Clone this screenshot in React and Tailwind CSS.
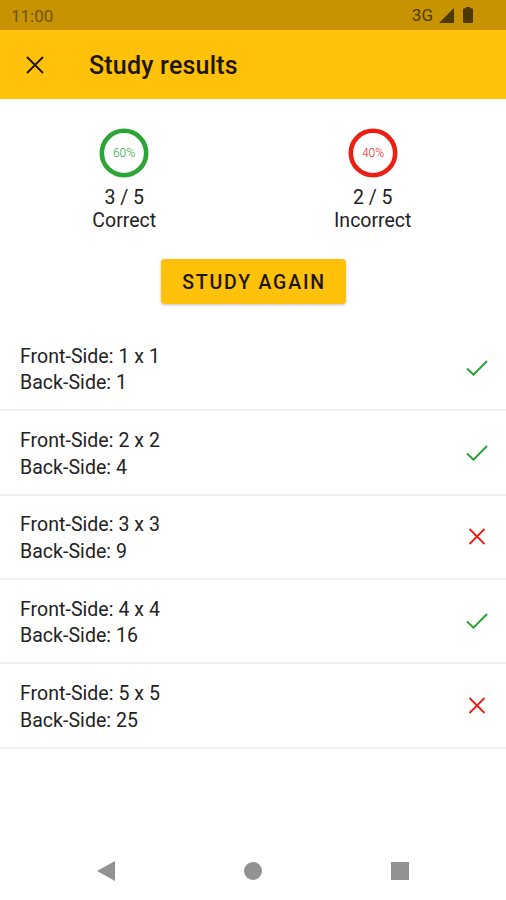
import React from "react";

const cards = [
  { front: "1 x 1", back: "1", correct: true },
  { front: "2 x 2", back: "4", correct: true },
  { front: "3 x 3", back: "9", correct: false },
  { front: "4 x 4", back: "16", correct: true },
  { front: "5 x 5", back: "25", correct: false },
];

function StatusBar() {
  return (
    <div className="h-[30px] shrink-0 bg-[#c79300] flex items-center justify-between pl-[11px] pr-[33px]">
      <span className="text-[17px] leading-[30px] text-[#6f5200] pt-px">11:00</span>
      <div className="flex items-center">
        <span className="text-[17px] leading-[30px] text-[#4d3900] mr-[6px]">3G</span>
        <svg className="w-[15px] h-[15px] mr-[9px]" viewBox="0 0 15 15" fill="#4d3900">
          <path d="M15 0v15H0z" />
        </svg>
        <svg className="w-[10px] h-[16px]" viewBox="0 0 10 16" fill="#4d3900">
          <path d="M3 0h4v1.2h2q1 0 1 1V15q0 1-1 1H1q-1 0-1-1V2.200q0-1 1-1h2z" />
        </svg>
      </div>
    </div>
  );
}

function Header() {
  return (
    <div className="h-[69px] shrink-0 bg-[#ffc10a] flex items-center pl-[26px]">
      <svg className="w-[18px] h-[18px] mr-[45px]" viewBox="0 0 18 18" fill="none" stroke="#1c1600" strokeWidth="1.8">
        <path d="M1 1l16 16M17 1L1 17" />
      </svg>
      <h1 className="text-[25px] leading-[30px] font-medium tracking-[0.2px] text-[#1c1600] pt-[3px]">Study results</h1>
    </div>
  );
}

function Score({ percent, amount, label, color }) {
  return (
    <div className="flex flex-col items-center">
      <svg className="w-[50px] h-[50px]" viewBox="0 0 50 50">
        <circle cx="25" cy="25" r="22.2" fill="none" stroke={color} strokeWidth="4.6" />
        <text x="25" y="29" textAnchor="middle" fontSize="12" fontWeight="300" fill={color}>
          {percent}
        </text>
      </svg>
      <span className="text-[19.5px] leading-[23px] mt-[8px]">{amount}</span>
      <span className="text-[19.5px] leading-[23px]">{label}</span>
    </div>
  );
}

function CardRow({ card }) {
  return (
    <li className="h-[84.35px] border-b-2 border-[#f0f0f0] flex items-center justify-between pl-[20px] pr-[17px]">
      <div className="text-[19.5px] leading-[26.5px] tracking-[0.05px] pt-[4px]">
        <p>Front-Side: {card.front}</p>
        <p>Back-Side: {card.back}</p>
      </div>
      {card.correct ? (
        <svg className="w-[24px] h-[24px]" viewBox="0 0 24 24" fill="none" stroke="#1fa02b" strokeWidth="1.8">
          <path d="M2 12.500l6.500 6.200L22 5" />
        </svg>
      ) : (
        <svg className="w-[24px] h-[24px]" viewBox="0 0 24 24" fill="none" stroke="#ea1b12" strokeWidth="1.8">
          <path d="M4.500 4l15 15M19.500 4l-15 15" />
        </svg>
      )}
    </li>
  );
}

function NavigationBar() {
  return (
    <div className="mt-auto mb-[19px] flex items-center justify-between pl-[97px] pr-[97px]">
      <svg className="w-[18px] h-[20px]" viewBox="0 0 18 20" fill="#929292">
        <path d="M18 0v20L0 10z" />
      </svg>
      <div className="w-[18px] h-[18px] rounded-full bg-[#929292]" />
      <div className="w-[18px] h-[18px] bg-[#929292]" />
    </div>
  );
}

export default function App() {
  return (
    <div className="w-full h-[900px] flex flex-col overflow-hidden bg-white text-[#222222] font-['Roboto',sans-serif]">
      <StatusBar />
      <Header />
      <div className="grid grid-cols-2 w-[497px] pt-[29px]">
        <Score percent="60%" amount="3 / 5" label="Correct" color="#2ba536" />
        <Score percent="40%" amount="2 / 5" label="Incorrect" color="#ea2015" />
      </div>
      <button className="self-center w-[185px] h-[45px] mt-[27px] pt-[3px] pl-[2px] rounded-[4px] bg-[#ffc10a] text-[19.5px] font-medium tracking-[1.8px] text-[#1c1600] shadow-[0_1px_3px_rgba(0,0,0,0.25)]">
        STUDY AGAIN
      </button>
      <ul className="mt-[23px]">
        {cards.map((card) => (
          <CardRow key={card.front} card={card} />
        ))}
      </ul>
      <NavigationBar />
    </div>
  );
}
